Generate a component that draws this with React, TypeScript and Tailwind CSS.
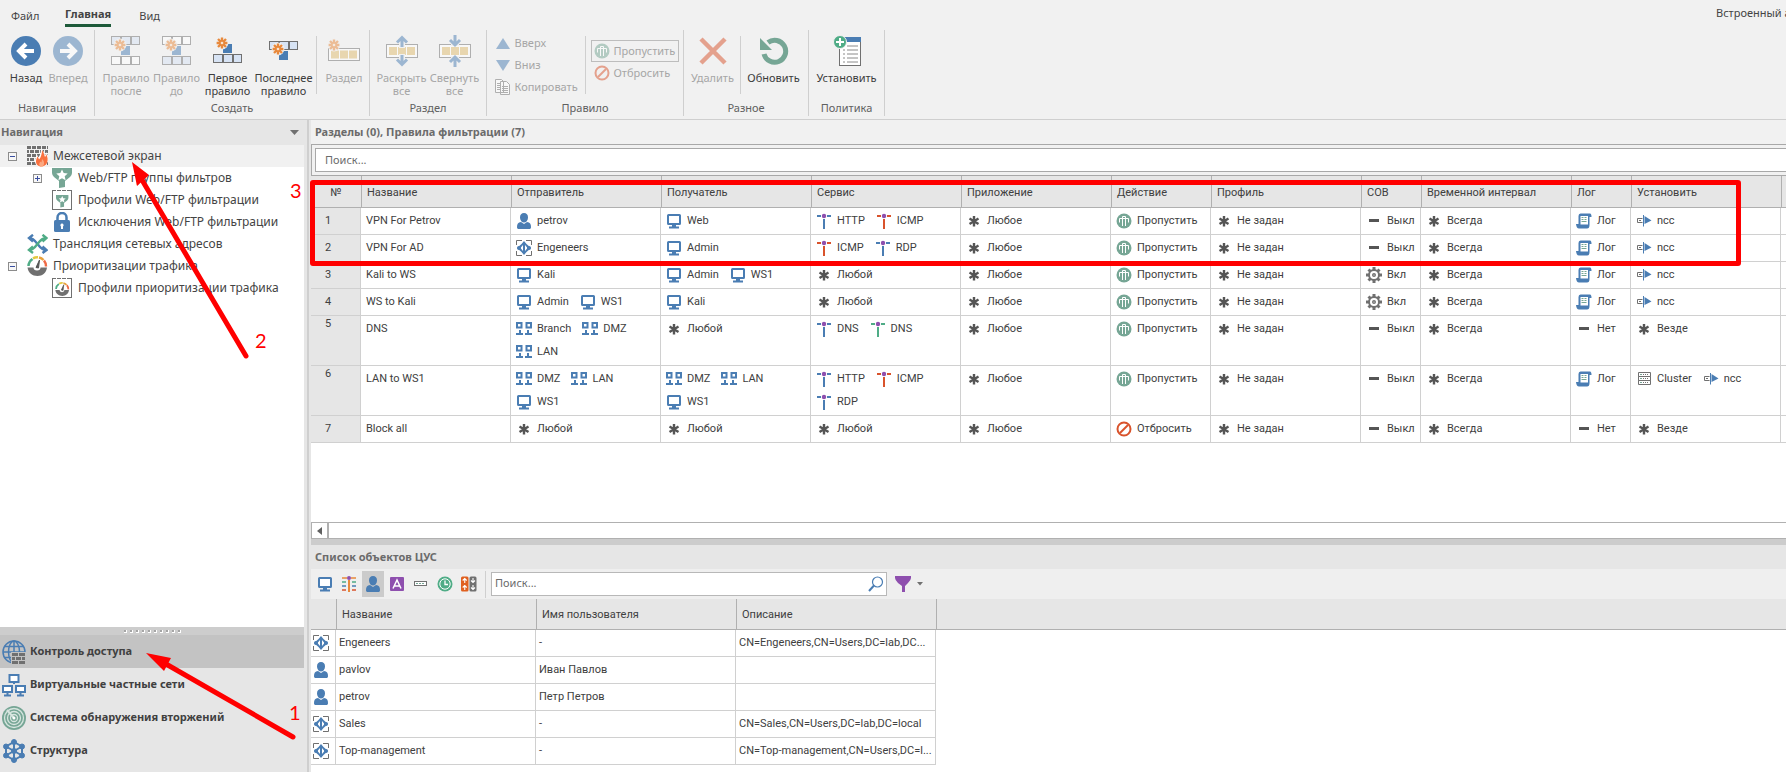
import { useState } from 'react';
import type { ReactNode } from 'react';
import clsx from 'clsx';

const BLUE = '#4a7db3';
const TEAL = '#76a695';
const GRAY = '#707070';
const RED = '#d9532c';
const GREEN = '#4fac86';
const PURPLE = '#8e4fae';

/* ---------- ribbon icons ---------- */

const Spark = ({ x, y }: { x: number; y: number }) => (
  <g transform={`translate(${x} ${y})`}>
    <circle r="6.4" fill="#f1f1f1" />
    <path d="M0-5.4V5.4M-5.4 0H5.4M-4-4L4 4M4-4L-4 4" stroke="#e8893c" strokeWidth="2.4" />
    <circle r="3" fill="#e8893c" />
    <circle r="1.3" fill="#f7e3d0" />
  </g>
);

const Cells = ({ y, fill }: { y: number; fill: string }) => (
  <g fill={fill} stroke={GRAY}>
    <rect x="0.5" y={y} width="9" height="8" />
    <rect x="10.5" y={y} width="9" height="8" />
    <rect x="20.5" y={y} width="8" height="8" />
  </g>
);

const RuleAfterIcon = () => (
  <svg width="30" height="30">
    <Cells y={0.5} fill="#d7e3f4" />
    <Cells y={20.5} fill="#fff" />
    <rect x="10" y="10" width="9" height="9" fill={BLUE} />
    <Spark x={9} y={9} />
  </svg>
);

const RuleBeforeIcon = () => (
  <svg width="30" height="30">
    <Cells y={0.5} fill="#fff" />
    <Cells y={20.5} fill="#d7e3f4" />
    <rect x="10" y="10" width="9" height="9" fill={BLUE} />
    <Spark x={9} y={9} />
  </svg>
);

const RuleFirstIcon = () => (
  <svg width="30" height="30">
    <Cells y={18.5} fill="#d7e3f4" />
    <rect x="10" y="8" width="9" height="9" fill={BLUE} />
    <Spark x={9} y={7} />
  </svg>
);

const RuleLastIcon = () => (
  <svg width="30" height="30">
    <Cells y={5.5} fill="#d7e3f4" />
    <rect x="10" y="15" width="9" height="9" fill={BLUE} />
    <Spark x={9} y={13} />
  </svg>
);

const Box = ({ y, h = 12 }: { y: number; h?: number }) => (
  <>
    <rect x="0.5" y={y} width="31" height={h} fill="#fff" stroke={GRAY} />
    <path d={`M3 ${y + h / 2}h8m1 0h8m1 0h8`} stroke="#e0bc70" strokeWidth="8" />
  </>
);

const SectionIcon = () => (
  <svg width="32" height="30">
    <Box y={12.5} />
    <Spark x={6} y={9} />
  </svg>
);

const ExpandIcon = () => (
  <svg width="32" height="32" viewBox="0 -1 32 32">
    <Box y={8.5} h={13} />
    <path d="M13 6h6v6h-6zM13 18h6v6h-6z" fill="#f1f1f1" />
    <path d="M16 1v10M16 29V19M11 6.500l5-5 5 5M11 23.500l5 5 5-5" fill="none" stroke={BLUE} strokeWidth="3" />
  </svg>
);

const CollapseIcon = () => (
  <svg width="32" height="32" viewBox="0 -1 32 32">
    <Box y={8.5} h={13} />
    <path d="M12 7h8v3h-8zM12 20h8v3h-8z" fill="#f1f1f1" />
    <path d="M16-1V9M16 31V21M11 4l5 5 5-5M11 26l5-5 5 5" fill="none" stroke={BLUE} strokeWidth="3" />
  </svg>
);

const ArrowCircle = ({ forward }: { forward?: boolean }) => (
  <svg width="30" height="30">
    <circle cx="15" cy="15" r="15" fill={BLUE} />
    <path d={forward ? 'M7 15h14M15 8l7 7-7 7' : 'M23 15H9M15 8l-7 7 7 7'} fill="none" stroke="#fff" strokeWidth="4" />
  </svg>
);

const DeleteIcon = () => (
  <svg width="30" height="30">
    <path d="M3 3l24 24M27 3L3 27" stroke={RED} strokeWidth="4.5" />
  </svg>
);

const RefreshIcon = () => (
  <svg width="30" height="30">
    <path d="M5 18a11 11 0 1 0 4-11.500" fill="none" stroke={TEAL} strokeWidth="5" />
    <path d="M1 2v12h12z" fill={TEAL} />
  </svg>
);

const InstallIcon = () => (
  <svg width="30" height="32">
    <rect x="7.5" y="3.5" width="21" height="27" fill="#fff" stroke={GRAY} />
    <path d="M7 2h22v5H7z" fill={BLUE} />
    <path d="M15 11h11M15 15h11M15 19h11M15 23h11M15 27h11M11 11h2M11 15h2M11 19h2M11 23h2M11 27h2" stroke="#8a8a8a" />
    <circle cx="8" cy="7" r="6.5" fill={GREEN} stroke="#f1f1f1" />
    <path d="M8 3v8M4 7h8" stroke="#fff" strokeWidth="2" />
  </svg>
);

/* ---------- 16px icons ---------- */

const Pass = () => (
  <svg width="16" height="16">
    <circle cx="8" cy="8" r="7.5" fill={TEAL} />
    <path d="M3.500 9.500v-4h9v4M6.500 13V5.500M9.500 13V5.500M6.500 5.500v-2h3v2" fill="none" stroke="#fff" />
  </svg>
);

const Drop = () => (
  <svg width="16" height="16">
    <circle cx="8" cy="8" r="6.5" fill="none" stroke={RED} strokeWidth="2" />
    <path d="M4 12l8-8" stroke={RED} strokeWidth="2" />
  </svg>
);

const CopyIcon = () => (
  <svg width="16" height="16" fill="#fff" stroke={GRAY}>
    <path d="M.5.500h6l2 2v11h-8zM5.500 2.500h6l3 3v10h-9z" />
    <path d="M2 4.500h3M2 6.500h3M2 8.500h3M2 10.500h3M7 7.500h6M7 9.500h6M7 11.500h6M7 13.500h6" />
  </svg>
);

const Triangle = ({ down }: { down?: boolean }) => (
  <svg width="16" height="16">
    <path d={down ? 'M1 3h14L8 14z' : 'M1 14h14L8 3z'} fill={BLUE} />
  </svg>
);

const Host = () => (
  <svg width="16" height="16">
    <rect x="2" y="2" width="12" height="9" rx="0.5" fill="#fff" stroke={BLUE} strokeWidth="2" />
    <path d="M6 13h4M3 14.500h10" stroke={BLUE} strokeWidth="2" />
  </svg>
);

const User = () => (
  <svg width="16" height="16" fill={BLUE}>
    <path d="M4 4.500C4 1.500 5.500 0 8 0s4 1.500 4 4.500S10 9.500 8 9.500 4 7.500 4 4.500z" />
    <path d="M1 14c0-3 1-4.500 4-5l3 2 3-2c3 .5 4 2 4 5 0 1.500-.5 2-2 2H3c-1.500 0-2-.5-2-2z" />
  </svg>
);

const Group = () => (
  <svg width="16" height="16">
    <path d="M.5 5V.500H6M10 .500h5.500V5M15.500 11v4.500H10M6 15.500H.500V11" fill="none" stroke={GRAY} />
    <path d="M8 1l2.500 3L15 8l-4.500 4L8 15l-2.500-3L1 8l4.500-4z" fill={BLUE} />
    <path d="M7 5v6L4.500 8zM9 5v6l2.500-3z" fill="#fff" />
    <circle cx="3" cy="8" r="2" fill={BLUE} />
    <circle cx="13" cy="8" r="2" fill={BLUE} />
  </svg>
);

const Net = () => (
  <svg width="16" height="16" fill="none" stroke={BLUE}>
    <path d="M1 2h4.500v4.500H1zM10.500 2H15v4.500h-4.500z" strokeWidth="2" />
    <path d="M4 9v4M12 9v4" strokeWidth="2" />
    <path d="M0 13h7M9 13h7" strokeWidth="2" />
  </svg>
);

const Service = ({ color }: { color: string }) => (
  <svg width="16" height="16">
    <path d="M1 3h4M11 3h4" stroke={color} strokeWidth="2" />
    <path d="M8 6v10" stroke={color} strokeWidth="2" />
    <circle cx="8" cy="3" r="2.2" fill={PURPLE} />
  </svg>
);

const Star = () => (
  <svg width="16" height="16">
    <path d="M8 3v10.500M3.500 5.500l9 5.500M12.500 5.500l-9 5.500" stroke="#555" strokeWidth="2.4" />
  </svg>
);

const Dash = () => (
  <svg width="16" height="16">
    <path d="M3 7.500h10" stroke="#555" strokeWidth="3" />
  </svg>
);

const Gear = () => (
  <svg width="16" height="16" fill="none" stroke={GRAY}>
    <path d="M8 0v3M8 13v3M0 8h3M13 8h3M2.500 2.500l2 2M11.500 11.500l2 2M13.500 2.500l-2 2M4.500 11.500l-2 2" strokeWidth="3" />
    <circle cx="8" cy="8" r="5" strokeWidth="2" />
    <circle cx="8" cy="8" r="1.3" strokeWidth="1.4" />
  </svg>
);

const Log = () => (
  <svg width="16" height="16">
    <path d="M2.500 11V3q0-2.500 2-2.500H14q1.500 0 1.500 3.500H13.500v8q0 3.500-2.500 3.500H3Q.500 15.500 0 11z" fill={BLUE} />
    <path d="M4.500 3H12v8.500H4.500z" fill="#fff" />
    <path d="M5.500 4.500h2M8.500 4.500h2M5.500 6.500h2M8.500 6.500h2M5.500 8.500h5" stroke={TEAL} />
  </svg>
);

const Gateway = () => (
  <svg width="16" height="16">
    <path d="M6.500 5.500h-5v4h5M3 7.500h2" fill="none" stroke={GRAY} />
    <path d="M7.500 2v11.500" stroke={BLUE} />
    <path d="M8.500 3l7 4.500-7 3.500z" fill={BLUE} />
  </svg>
);

const Cluster = () => (
  <svg width="16" height="16" fill="#fff" stroke={GRAY}>
    <path d="M2.500 1.500h12v4h-12zM2.500 5.500h12v4h-12zM2.500 9.500h12v4h-12z" />
    <path d="M4 3.500h2M4 7.500h2M4 11.500h2" stroke={TEAL} />
    <path d="M7 3.500h6M7 7.500h6M7 11.500h6" strokeDasharray="1 1" />
  </svg>
);

/* ---------- object toolbar icons ---------- */

const ServicesIcon = () => (
  <svg width="16" height="16" strokeWidth="1.6">
    <path d="M1 2h5M10 2h5" stroke="#e8893c" />
    <path d="M1 6h4M11 6h4" stroke={GREEN} />
    <path d="M1 10h4M11 10h4" stroke={BLUE} />
    <path d="M1 14h4M11 14h4" stroke={RED} />
    <path d="M8 4v12" stroke="#e8893c" strokeWidth="2" />
    <circle cx="8" cy="2" r="2" fill={PURPLE} />
  </svg>
);

const AppIcon = () => (
  <svg width="16" height="16">
    <rect x="1" y="1" width="14" height="14" rx="1" fill={PURPLE} />
    <path d="M4 12.500L8 4l4 8.500M5.500 10h5" fill="none" stroke="#fff" strokeWidth="1.5" />
  </svg>
);

const DeviceIcon = () => (
  <svg width="16" height="16">
    <rect x="1.5" y="5.5" width="12" height="4" fill="#fff" stroke={GRAY} />
    <path d="M3 7.500h9" stroke={TEAL} strokeDasharray="2 1" />
  </svg>
);

const ClockIcon = () => (
  <svg width="16" height="16">
    <circle cx="8" cy="8" r="7.5" fill={GREEN} />
    <circle cx="8" cy="8" r="5.2" fill="none" stroke="#fff" />
    <path d="M8 4.500V8.500h3" fill="none" stroke="#fff" strokeWidth="1.3" />
  </svg>
);

const TrafficIcon = () => (
  <svg width="16" height="16">
    <rect x="0" y="0.5" width="7.5" height="15" rx="1.5" fill="#e0601f" />
    <rect x="8.5" y="0.5" width="7" height="15" rx="1.5" fill={GRAY} />
    <path d="M3.750 2v5M1.700 4.500l2-2 2 2M3.750 9v5M1.700 11.500l2-2 2 2M12 2v5M10 4.500l2 2 2-2M12 9v5M10 11.500l2 2 2-2" fill="none" stroke="#fff" strokeWidth="1.1" />
  </svg>
);

/* ---------- navigation icons ---------- */

const FirewallIcon = () => (
  <svg width="21" height="21">
    <path d="M0 1.500h21M0 9.500h21M0 17.500h21" stroke={GRAY} strokeWidth="3" strokeDasharray="4 1" />
    <path d="M0 5.500h21M0 13.500h21" stroke={GRAY} strokeWidth="3" strokeDasharray="2 1 4 1 4 1 4 1 3" />
    <path d="M14 3c3 2 3 4 4 6 1-1 1-2 1-3 3 4 3 8 1 11-1 3-3 4-6 4-4 0-6-3-6-6 0-3 1-4 2-6 1 1 1 2 1 3 2-3 3-5 3-9z" fill="#fff" />
    <path d="M15 4c2 2 2 5 3 7 1-1 1-2 1-3 2 3 2 6 1 9-1 2-3 3.500-5.500 3.500-4 0-5.500-2.500-5.500-5 0-2 1-4 1.500-5 1 1 1 2 1.500 3 2-2 3-6 3-9.500z" fill="#f9713f" />
    <path d="M15 13c2 2 3 4 1 7.500h-3c-1.500-2-.5-4 .5-5l1 1z" fill="#fba982" />
  </svg>
);

const FilterShape = () => (
  <>
    <path d="M0 0h20v5q0 2-2 4l-5 4v6l-6 1v-7L2 9Q0 7 0 5z" fill={TEAL} />
    <path d="M10 1.500l1.700 3.600 4 .5-3 2.600.9 4L10 10.200l-3.600 2 .9-4-3-2.600 4-.5z" fill="#fff" />
  </>
);

const FilterGroupIcon = () => (
  <svg width="20" height="20">
    <FilterShape />
  </svg>
);

const Frame = ({ children }: { children: ReactNode }) => (
  <svg width="20" height="20">
    <rect x="0.5" y="0.5" width="19" height="19" fill="#fff" stroke={GRAY} />
    <path d="M4 .500h13" stroke="#fff" strokeDasharray="1 4" />
    {children}
  </svg>
);

const Gauge = () => (
  <>
    <path d="M1.500 10a9 9 0 0 1 4-7" stroke={GREEN} fill="none" strokeWidth="2.5" />
    <path d="M6 2.300a9 9 0 0 1 5-1" stroke="#e3c93f" fill="none" strokeWidth="2.5" />
    <path d="M12 1.500a9 9 0 0 1 4.500 2.500" stroke="#e8a23c" fill="none" strokeWidth="2.5" />
    <path d="M17 4.500a9 9 0 0 1 2 6" stroke="#f06a45" fill="none" strokeWidth="2.5" />
    <path d="M.500 11.500h6a3.500 3 0 0 0 7 0h6.500c-.5 5-4.500 8.500-9.500 8.500S1 16.500.500 11.500z" fill={GRAY} />
    <path d="M9 11.500L12.500 4 11.500 12z" fill="#555" stroke="#555" />
  </>
);

const LockIcon = () => (
  <svg width="20" height="20">
    <path d="M5.500 9V5.500a4.500 4.500 0 0 1 9 0V9" fill="none" stroke={BLUE} strokeWidth="2.5" />
    <rect x="2" y="8" width="16" height="12" rx="1.5" fill={BLUE} />
    <path d="M10 11.500a1.700 1.700 0 0 1 1 3v2.500H9v-2.500a1.700 1.700 0 0 1 1-3z" fill="#fff" />
  </svg>
);

const NatIcon = () => (
  <svg width="21" height="20" fill="none" strokeWidth="2.4">
    <path d="M2 4c8 0 9 12 17 12M6 .800L2 4l4 3.500M15.500 12.500l4 3.500-4 3" stroke={BLUE} />
    <path d="M2 16c8 0 9-12 17-12M6 12.500L2 16l4 3M15.500.800L19.500 4l-4 3.500" stroke={GREEN} />
  </svg>
);

const AccessIcon = () => (
  <svg width="24" height="24">
    <g fill="none" stroke={BLUE} strokeWidth="1.5">
      <circle cx="12" cy="12" r="11" />
      <ellipse cx="12" cy="12" rx="5.5" ry="11" />
      <path d="M12 1v22M1 12h22M2.500 6.500h19M2.500 17.500h19" />
    </g>
    <path d="M9 12h15v12H9z" fill="#c2c2c2" />
    <path d="M10 14.500h14M10 22.500h14" stroke={GRAY} strokeWidth="3" strokeDasharray="6 1" />
    <path d="M10 18.500h14" stroke={GRAY} strokeWidth="3" strokeDasharray="3 1 5 1" />
  </svg>
);

const VpnIcon = () => (
  <svg width="24" height="24" fill="#fff" stroke={BLUE} strokeWidth="2">
    <path d="M7.500 2h9v7h-9zM1 13h9v6H1zM14 13h9v6h-9z" />
    <path d="M2 22.500h7M15 22.500h7M5.500 19v3M18.500 19v3M12 9v2" />
  </svg>
);

const IdsIcon = () => (
  <svg width="24" height="24" fill="none">
    <circle cx="12" cy="12" r="12" fill={TEAL} />
    <g stroke="#d7e5df" strokeWidth="1.3">
      <circle cx="12" cy="12" r="9.5" />
      <circle cx="12" cy="12" r="6.5" />
      <circle cx="12" cy="12" r="3.5" />
      <path d="M12 12L5 4" strokeWidth="2" />
    </g>
    <circle cx="12" cy="12" r="1.5" fill="#fff" />
  </svg>
);

const StructureIcon = () => (
  <svg width="24" height="24" fill={BLUE} stroke={BLUE}>
    <path d="M12 3l8 4.500v9L12 21l-8-4.500v-9zM12 3v18M4 7.500l16 9M20 7.500l-16 9" fill="none" strokeWidth="2" />
    {[[12, 3], [20, 7.5], [20, 16.5], [12, 21], [4, 16.5], [4, 7.5], [12, 12]].map(([cx, cy]) => (
      <circle key={`${cx}-${cy}`} cx={cx} cy={cy} r="2.5" />
    ))}
  </svg>
);

/* ---------- ribbon ---------- */

const RibbonButton = ({ icon, label, disabled, className }: { icon: ReactNode; label: string; disabled?: boolean; className: string }) => (
  <button disabled={disabled} className={clsx('flex flex-col items-center', className)}>
    <span className={clsx('flex h-[30px] items-center', disabled && 'opacity-50')}>{icon}</span>
    <span className={clsx('mt-[5px] whitespace-pre-line leading-[13px]', disabled ? 'text-[#a6a6a6]' : 'text-[#3c3c3c]')}>{label}</span>
  </button>
);

const SmallButton = ({ icon, label, className }: { icon: ReactNode; label: string; className?: string }) => (
  <button disabled className={clsx('flex h-[22px] items-center gap-1 text-[#a6a6a6]', className)}>
    <span className="opacity-50">{icon}</span>
    {label}
  </button>
);

const RibbonGroup = ({ title, className, children }: { title: string; className: string; children: ReactNode }) => (
  <div className={clsx('flex h-[86px] shrink-0 flex-col justify-between border-r border-[#cfcfcf] pt-[6px]', className)}>
    <div className="flex justify-center">{children}</div>
    <div className="text-center leading-4 text-[#606060]">{title}</div>
  </div>
);

const Divider = () => <div className="mx-[2px] h-[58px] w-px shrink-0 bg-[#cfcfcf]" />;

const Ribbon = () => (
  <header className="shrink-0 border-b border-[#cfcfcf] bg-[#f1f1f1] text-[11px]">
    <div className="flex h-[30px] items-start justify-between">
      <nav className="flex pl-[11px] leading-[18px] text-[#444]">
        <button className="h-[27px] w-[54px] pt-1 text-left">Файл</button>
        <button className="h-[27px] border-b-3 border-[#1e5a3a] pt-1 font-bold">Главная</button>
        <button className="ml-7 h-[27px] pt-1">Вид</button>
      </nav>
      <div className="w-[70px] overflow-hidden whitespace-nowrap pt-[5px] leading-4 text-[#444]">Встроенный а</div>
    </div>
    <div className="flex pb-[3px]">
      <RibbonGroup title="Навигация" className="w-[95px]">
        <RibbonButton className="w-[42px]" icon={<ArrowCircle />} label="Назад" />
        <RibbonButton className="w-[42px]" icon={<ArrowCircle forward />} label="Вперед" disabled />
      </RibbonGroup>
      <RibbonGroup title="Создать" className="w-[275px]">
        <div className="flex flex-1 justify-end">
          <RibbonButton className="w-[50px]" icon={<RuleAfterIcon />} label={'Правило\nпосле'} disabled />
          <RibbonButton className="w-[51px]" icon={<RuleBeforeIcon />} label={'Правило\nдо'} disabled />
          <RibbonButton className="w-[51px]" icon={<RuleFirstIcon />} label={'Первое\nправило'} />
          <RibbonButton className="w-[61px]" icon={<RuleLastIcon />} label={'Последнее\nправило'} />
          <Divider />
          <RibbonButton className="w-[50px]" icon={<SectionIcon />} label="Раздел" disabled />
        </div>
      </RibbonGroup>
      <RibbonGroup title="Раздел" className="w-[117px]">
        <RibbonButton className="w-[53px]" icon={<ExpandIcon />} label={'Раскрыть\nвсе'} disabled />
        <RibbonButton className="w-[53px]" icon={<CollapseIcon />} label={'Свернуть\nвсе'} disabled />
      </RibbonGroup>
      <RibbonGroup title="Правило" className="w-[197px]">
        <div className="flex w-[91px] flex-col pl-[3px]">
          <SmallButton className="-mt-1" icon={<Triangle />} label="Вверх" />
          <SmallButton icon={<Triangle down />} label="Вниз" />
          <SmallButton icon={<CopyIcon />} label="Копировать" />
        </div>
        <Divider />
        <div className="flex flex-col pl-[3px] pt-1">
          <SmallButton className="w-[88px] border border-[#bdbdbd] pl-[2px]" icon={<Pass />} label="Пропустить" />
          <SmallButton className="pl-[3px]" icon={<Drop />} label="Отбросить" />
        </div>
      </RibbonGroup>
      <RibbonGroup title="Разное" className="w-[125px]">
        <RibbonButton className="w-[50px]" icon={<DeleteIcon />} label="Удалить" disabled />
        <Divider />
        <RibbonButton className="w-[62px]" icon={<RefreshIcon />} label="Обновить" />
      </RibbonGroup>
      <RibbonGroup title="Политика" className="w-[76px]">
        <RibbonButton className="w-[70px]" icon={<InstallIcon />} label="Установить" />
      </RibbonGroup>
    </div>
  </header>
);

/* ---------- left panel ---------- */

type TreeItem = { label: string; icon: ReactNode; level: number; toggle?: 'open' | 'closed' };

const tree: TreeItem[] = [
  { label: 'Межсетевой экран', icon: <FirewallIcon />, level: 0, toggle: 'open' },
  { label: 'Web/FTP группы фильтров', icon: <FilterGroupIcon />, level: 1, toggle: 'closed' },
  {
    label: 'Профили Web/FTP фильтрации',
    icon: <Frame><g transform="translate(4 5) scale(0.620)"><FilterShape /></g></Frame>,
    level: 1,
  },
  { label: 'Исключения Web/FTP фильтрации', icon: <LockIcon />, level: 1 },
  { label: 'Трансляция сетевых адресов', icon: <NatIcon />, level: 0 },
  { label: 'Приоритизации трафика', icon: <svg width="21" height="21"><Gauge /></svg>, level: 0, toggle: 'open' },
  {
    label: 'Профили приоритизации трафика',
    icon: <Frame><g transform="translate(3 4) scale(0.700)"><Gauge /></g></Frame>,
    level: 1,
  },
];

const sections = [
  { label: 'Контроль доступа', icon: <AccessIcon /> },
  { label: 'Виртуальные частные сети', icon: <VpnIcon /> },
  { label: 'Система обнаружения вторжений', icon: <IdsIcon /> },
  { label: 'Структура', icon: <StructureIcon /> },
];

const Toggle = ({ state, label }: { state: 'open' | 'closed'; label: string }) => (
  <button aria-label={label} className="h-[9px] w-[9px]">
    <svg width="9" height="9" className="block">
      <rect x="0.5" y="0.5" width="8" height="8" fill="#f7f7f7" stroke="#8c8c8c" />
      <path d={state === 'open' ? 'M2 4.500h5' : 'M2 4.500h5M4.500 2v5'} stroke="#3a4fa0" />
    </svg>
  </button>
);

const Sidebar = () => {
  const [active, setActive] = useState(0);
  return (
    <aside className="flex w-[304px] shrink-0 flex-col bg-[#e6e6e6]">
      <div className="flex h-[25px] shrink-0 items-center justify-between pl-px pr-[5px] text-[11px] font-bold text-[#6b6b6b]">
        Навигация
        <svg width="9" height="5"><path d="M0 0h9L4.500 5z" fill="#707070" /></svg>
      </div>
      <ul className="min-h-0 flex-1 overflow-hidden bg-white text-[#444]">
        {tree.map((item, i) => (
          <li
            key={item.label}
            className={clsx('flex h-[22px] items-center', item.level ? 'pl-[33px]' : 'pl-2', i === 0 && 'bg-[#f1f1f1]')}
          >
            <span className="flex w-[19px] shrink-0">{item.toggle && <Toggle state={item.toggle} label={item.label} />}</span>
            <span className="flex w-[26px] shrink-0">{item.icon}</span>
            <span className="whitespace-nowrap">{item.label}</span>
          </li>
        ))}
      </ul>
      <div className="flex h-2 shrink-0 items-center justify-center gap-[3px] bg-[#cdcdcd]">
        {Array.from({ length: 10 }, (_, i) => (
          <span key={i} className="h-[3px] w-[3px] border-b border-r border-white bg-[#a5a5a5]" />
        ))}
      </div>
      <nav className="h-[137px] shrink-0 overflow-hidden text-[11px]">
        {sections.map((section, i) => (
          <button
            key={section.label}
            onClick={() => setActive(i)}
            className={clsx('flex h-[33px] w-full items-center gap-1 pl-[2px] font-bold text-[#404040]', i === active && 'bg-[#c3c3c3]')}
          >
            {section.icon}
            {section.label}
          </button>
        ))}
        <button aria-label="Администрирование" className="flex h-[33px] w-full items-center pl-[2px]">
          <svg width="24" height="24"><circle cx="8" cy="4" r="4" fill={PURPLE} /></svg>
        </button>
      </nav>
    </aside>
  );
};

/* ---------- rules table ---------- */

const icons: Record<string, ReactNode> = {
  host: <Host />,
  user: <User />,
  group: <Group />,
  net: <Net />,
  tcp: <Service color={BLUE} />,
  icmp: <Service color={RED} />,
  udp: <Service color={GREEN} />,
  any: <Star />,
  none: <Dash />,
  gear: <Gear />,
  log: <Log />,
  gw: <Gateway />,
  cluster: <Cluster />,
  pass: <Pass />,
  drop: <Drop />,
};

type Item = [icon: string, label: string];
type Rule = { name: string; from: Item[]; to: Item[]; service: Item[]; pass: boolean; ips: boolean; log: boolean; target: Item[] };

const ncc: Item = ['gw', 'ncc'];
const anyItem: Item = ['any', 'Любой'];

const rules: Rule[] = [
  { name: 'VPN For Petrov', from: [['user', 'petrov']], to: [['host', 'Web']], service: [['tcp', 'HTTP'], ['icmp', 'ICMP']], pass: true, ips: false, log: true, target: [ncc] },
  { name: 'VPN For AD', from: [['group', 'Engeneers']], to: [['host', 'Admin']], service: [['icmp', 'ICMP'], ['tcp', 'RDP']], pass: true, ips: false, log: true, target: [ncc] },
  { name: 'Kali to WS', from: [['host', 'Kali']], to: [['host', 'Admin'], ['host', 'WS1']], service: [anyItem], pass: true, ips: true, log: true, target: [ncc] },
  { name: 'WS to Kali', from: [['host', 'Admin'], ['host', 'WS1']], to: [['host', 'Kali']], service: [anyItem], pass: true, ips: true, log: true, target: [ncc] },
  { name: 'DNS', from: [['net', 'Branch'], ['net', 'DMZ'], ['net', 'LAN']], to: [anyItem], service: [['tcp', 'DNS'], ['udp', 'DNS']], pass: true, ips: false, log: false, target: [['any', 'Везде']] },
  { name: 'LAN to WS1', from: [['net', 'DMZ'], ['net', 'LAN'], ['host', 'WS1']], to: [['net', 'DMZ'], ['net', 'LAN'], ['host', 'WS1']], service: [['tcp', 'HTTP'], ['icmp', 'ICMP'], ['tcp', 'RDP']], pass: true, ips: false, log: true, target: [['cluster', 'Cluster'], ncc] },
  { name: 'Block all', from: [anyItem], to: [anyItem], service: [anyItem], pass: false, ips: false, log: false, target: [['any', 'Везде']] },
];

const columns = ['Название', 'Отправитель', 'Получатель', 'Сервис', 'Приложение', 'Действие', 'Профиль', 'СОВ', 'Временной интервал', 'Лог', 'Установить'];

const th = 'border-b border-l border-[#b0b0b0] bg-[#e6e6e6] pl-[5px] pt-[3px] text-left font-normal';
const td = 'border-b border-r border-[#d0d0d0] px-[5px] py-[3px] align-top';

const ItemsCell = ({ items }: { items: Item[] }) => {
  // an object cell shows two entries per line
  const lines = [items.slice(0, 2), items.slice(2)].filter((line) => line.length > 0);
  return (
    <td className={td}>
      <div className="flex flex-col gap-[3px]">
        {lines.map((line, n) => (
          <div key={n} className="flex gap-[11px]">
            {line.map(([icon, label], i) => (
              <span key={i} className="flex h-5 items-center gap-[5px] whitespace-nowrap">
                {icons[icon]}
                {label}
              </span>
            ))}
          </div>
        ))}
      </div>
    </td>
  );
};

const RulesTable = () => (
  <table className="w-full table-fixed border-separate border-spacing-0 font-['Roboto',sans-serif] text-[11px] text-[#404040]">
    <colgroup>
      <col className="w-[50px]" />
      <col span={5} className="w-[150px]" />
      <col className="w-[100px]" />
      <col className="w-[150px]" />
      <col className="w-[60px]" />
      <col className="w-[150px]" />
      <col className="w-[60px]" />
      <col className="w-[150px]" />
      <col />
    </colgroup>
    <thead>
      <tr className="h-8">
        <th className="border-b border-[#b0b0b0] bg-[#e6e6e6] pt-[3px] text-center font-normal">№</th>
        {columns.map((c) => <th key={c} className={th}>{c}</th>)}
        <th className={th} />
      </tr>
    </thead>
    <tbody>
      {rules.map((r, i) => (
        <tr key={r.name}>
          <td className={clsx('border-b border-r border-[#d0d0d0] bg-[#e6e6e6] pl-[14px] align-top', r.from.length > 2 ? 'leading-4' : 'leading-[26px]')}>
            {i + 1}
          </td>
          <td className={clsx(td, 'leading-5')}>{r.name}</td>
          <ItemsCell items={r.from} />
          <ItemsCell items={r.to} />
          <ItemsCell items={r.service} />
          <ItemsCell items={[['any', 'Любое']]} />
          <ItemsCell items={[r.pass ? ['pass', 'Пропустить'] : ['drop', 'Отбросить']]} />
          <ItemsCell items={[['any', 'Не задан']]} />
          <ItemsCell items={[r.ips ? ['gear', 'Вкл'] : ['none', 'Выкл']]} />
          <ItemsCell items={[['any', 'Всегда']]} />
          <ItemsCell items={[r.log ? ['log', 'Лог'] : ['none', 'Нет']]} />
          <ItemsCell items={r.target} />
          <td className="border-b border-[#d0d0d0]" />
        </tr>
      ))}
    </tbody>
  </table>
);

/* ---------- objects panel ---------- */

const objects = [
  { icon: 'group', name: 'Engeneers', user: '-', info: 'CN=Engeneers,CN=Users,DC=lab,DC...' },
  { icon: 'user', name: 'pavlov', user: 'Иван Павлов', info: '' },
  { icon: 'user', name: 'petrov', user: 'Петр Петров', info: '' },
  { icon: 'group', name: 'Sales', user: '-', info: 'CN=Sales,CN=Users,DC=lab,DC=local' },
  { icon: 'group', name: 'Top-management', user: '-', info: 'CN=Top-management,CN=Users,DC=l...' },
];

const tools: { label: string; icon: ReactNode }[] = [
  { label: 'Узлы', icon: <Host /> },
  { label: 'Сервисы', icon: <ServicesIcon /> },
  { label: 'Пользователи', icon: <User /> },
  { label: 'Приложения', icon: <AppIcon /> },
  { label: 'Устройства', icon: <DeviceIcon /> },
  { label: 'Интервалы', icon: <ClockIcon /> },
  { label: 'Трафик', icon: <TrafficIcon /> },
];

const ObjectsPanel = () => {
  const [tool, setTool] = useState(2);
  return (
    <section className="shrink-0 bg-white pb-[7px]">
      <h2 className="h-6 bg-[#e6e6e6] pl-1 text-[11px] font-bold leading-6 text-[#6b6b6b]">Список объектов ЦУС</h2>
      <div className="flex h-[30px] items-center bg-[#efefef] pl-[3px]">
        <div className="flex gap-[2px]">
          {tools.map((t, i) => (
            <button
              key={t.label}
              aria-label={t.label}
              onClick={() => setTool(i)}
              className={clsx('flex h-[26px] w-[22px] items-center justify-center', i === tool && 'bg-[#cbcbcb]')}
            >
              {t.icon}
            </button>
          ))}
        </div>
        <div className="mx-[5px] h-[27px] w-px bg-[#cfcfcf]" />
        <label className="flex h-6 w-[396px] items-center border border-[#b8b8b8] bg-white pl-[3px] pr-[2px]">
          <input aria-label="Поиск объектов" placeholder="Поиск..." className="min-w-0 flex-1 pb-[2px] text-[11px] outline-none placeholder:text-[#6b6b6b]" />
          <svg width="16" height="16" fill="none" stroke={BLUE}>
            <circle cx="9.5" cy="6" r="5" strokeWidth="1.2" />
            <path d="M6 9.500L1 15" strokeWidth="2" />
          </svg>
        </label>
        <button aria-label="Фильтр" className="ml-2 flex items-center gap-[6px]">
          <svg width="16" height="16"><path d="M0 0h16v2q0 2-3 5l-3 3v6H7v-6L3 7Q0 4 0 2z" fill={PURPLE} /></svg>
          <svg width="6" height="4"><path d="M0 0h6L3 3.500z" fill="#707070" /></svg>
        </button>
      </div>
      <table className="w-full table-fixed border-separate border-spacing-0 font-['Roboto',sans-serif] text-[11px] text-[#404040]">
        <colgroup>
          <col className="w-[25px]" />
          <col span={3} className="w-[200px]" />
          <col />
        </colgroup>
        <thead>
          <tr className="h-[31px]">
            <th className="border-b border-[#b0b0b0] bg-[#e6e6e6]" />
            <th className={th}>Название</th>
            <th className={th}>Имя пользователя</th>
            <th className={th}>Описание</th>
            <th className={th} />
          </tr>
        </thead>
        <tbody>
          {objects.map((o) => (
            <tr key={o.name} className="h-[27px]">
              <td className="border-b border-r border-[#d0d0d0] pl-[2px]">{icons[o.icon]}</td>
              <td className="border-b border-r border-[#d0d0d0] px-[3px]">{o.name}</td>
              <td className="border-b border-r border-[#d0d0d0] px-[3px]">{o.user}</td>
              <td className="truncate border-b border-r border-[#d0d0d0] px-[3px]">{o.info}</td>
              <td />
            </tr>
          ))}
        </tbody>
      </table>
    </section>
  );
};

/* ---------- markup over the window ---------- */

const Annotations = () => (
  <div className="pointer-events-none absolute inset-0 font-['Lato',sans-serif] text-[20px] leading-6 text-[#ff0000]">
    <div className="absolute left-[310px] top-[180px] h-[86px] w-[1431px] rounded-[3px] border-5 border-[#ff0000]" />
    <svg width="310" height="772" className="absolute left-0 top-0" fill="#ff0000" stroke="#ff0000">
      <path d="M246 356L142 180M293 737L166 664" strokeWidth="5" strokeLinecap="round" />
      <path d="M132 162l17 13-12 11zM146 653l25 5-7 13z" stroke="none" />
    </svg>
    <span className="absolute left-[290px] top-[178px]">3</span>
    <span className="absolute left-[255px] top-[328px]">2</span>
    <span className="absolute left-[289px] top-[700px]">1</span>
  </div>
);

export default function App() {
  return (
    <div className="relative flex h-screen flex-col overflow-hidden bg-[#f1f1f1] font-['Noto_Sans',sans-serif] text-[12px]">
      <Ribbon />
      <div className="flex min-h-0 flex-1">
        <Sidebar />
        <div className="w-[7px] shrink-0 border-l-3 border-r-2 border-l-[#e6e6e6] border-r-[#e6e6e6] bg-[#cfcfcf]" />
        <main className="flex min-w-0 flex-1 flex-col">
          <h1 className="h-6 shrink-0 pl-1 text-[11px] font-bold leading-6 text-[#6b6b6b]">Разделы (0), Правила фильтрации (7)</h1>
          <div className="h-8 shrink-0 border-y border-l border-[#a8a8a8] py-[3px] pl-[3px]">
            <input
              aria-label="Поиск правил"
              placeholder="Поиск..."
              className="block h-6 w-full border-y border-l border-[#a8a8a8] bg-white pb-[2px] pl-[9px] text-[11px] outline-none placeholder:text-[#6b6b6b]"
            />
          </div>
          <div className="min-h-0 flex-1 overflow-hidden bg-white">
            <RulesTable />
          </div>
          <div className="flex h-[17px] shrink-0 border-y border-l border-[#b0b0b0] bg-white">
            <button aria-label="Прокрутить влево" className="flex w-[17px] items-center justify-center border-r-2 border-[#b0b0b0]">
              <svg width="5" height="8"><path d="M5 0v8L0 4z" fill="#606060" /></svg>
            </button>
          </div>
          <div className="h-[6px] shrink-0 bg-[#cccccc]" />
          <ObjectsPanel />
        </main>
      </div>
      <Annotations />
    </div>
  );
}
